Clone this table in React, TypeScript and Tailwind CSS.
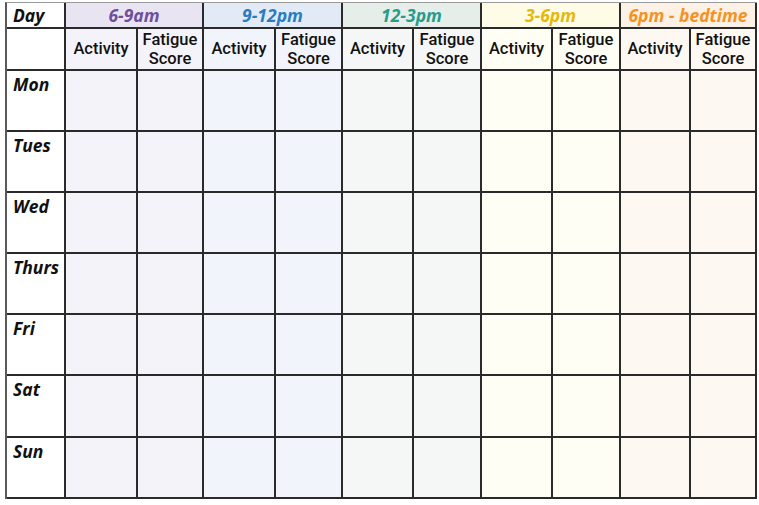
import React from "react";

const groups = [
  { label: "6-9am", text: "text-[#6f4e9e]", head: "bg-[#e8e4f2]", body: "bg-[#f4f3f9]" },
  { label: "9-12pm", text: "text-[#2a7cc1]", head: "bg-[#e2eaf6]", body: "bg-[#f1f4fa]" },
  { label: "12-3pm", text: "text-[#259c8c]", head: "bg-[#e6eeea]", body: "bg-[#f4f7f6]" },
  { label: "3-6pm", text: "text-[#e5b80b]", head: "bg-[#fefbe6]", body: "bg-[#fffef4]" },
  { label: "6pm - bedtime", text: "text-[#f5921f]", head: "bg-[#fdf0e4]", body: "bg-[#fef8f3]" },
];

const days = ["Mon", "Tues", "Wed", "Thurs", "Fri", "Sat", "Sun"];

export default function App() {
  return (
    <div className="w-[759px] h-[505px] bg-white pl-[5px] pt-[2px]" style={{ fontFamily: '"Open Sans", "Noto Sans", sans-serif' }}>
      <div
        className="grid w-[752px] gap-[2px] bg-[#2a2a2a] border-t border-[#9a9a9a] border-l-2 border-l-[#5a5a5a] pr-[2px] pb-[2px] text-[#111]"
        style={{
          gridTemplateColumns: "57px 70px 64px 70px 65px 69px 66px 69px 66px 68px 64px",
          gridTemplateRows: "24px 40px 59px 59px 59px 59px 59px 60px 59px",
        }}
      >
        <div className="bg-white flex items-center pl-[6px] pt-[1px] text-[17.5px] font-bold italic leading-none">Day</div>
        {groups.map((g) => (
          <div key={g.label} className={`col-span-2 ${g.head} ${g.text} flex items-center justify-center pt-[1px] text-[17.5px] font-bold italic leading-none`}>
            {g.label}
          </div>
        ))}
        <div className="bg-white" />
        {groups.map((g) => (
          <React.Fragment key={g.label + "s"}>
            <div className={`${g.body} flex items-center justify-center text-[16.5px] font-medium leading-none`} style={{ fontFamily: 'Roboto, "Open Sans", sans-serif' }}>Activity</div>
            <div className={`${g.body} flex flex-col items-center justify-center text-[16.5px] font-medium leading-[19px]`} style={{ fontFamily: 'Roboto, "Open Sans", sans-serif' }}>
              <span className="block leading-[19px]">Fatigue</span>
              <span className="block leading-[19px]">Score</span>
            </div>
          </React.Fragment>
        ))}
        {days.map((d) => (
          <React.Fragment key={d}>
            <div className="bg-white pl-[6px] pt-[1px] text-[17.5px] font-bold italic leading-[24px]">{d}</div>
            {groups.map((g) => (
              <React.Fragment key={d + g.label}>
                <div className={g.body} />
                <div className={g.body} />
              </React.Fragment>
            ))}
          </React.Fragment>
        ))}
      </div>
    </div>
  );
}
